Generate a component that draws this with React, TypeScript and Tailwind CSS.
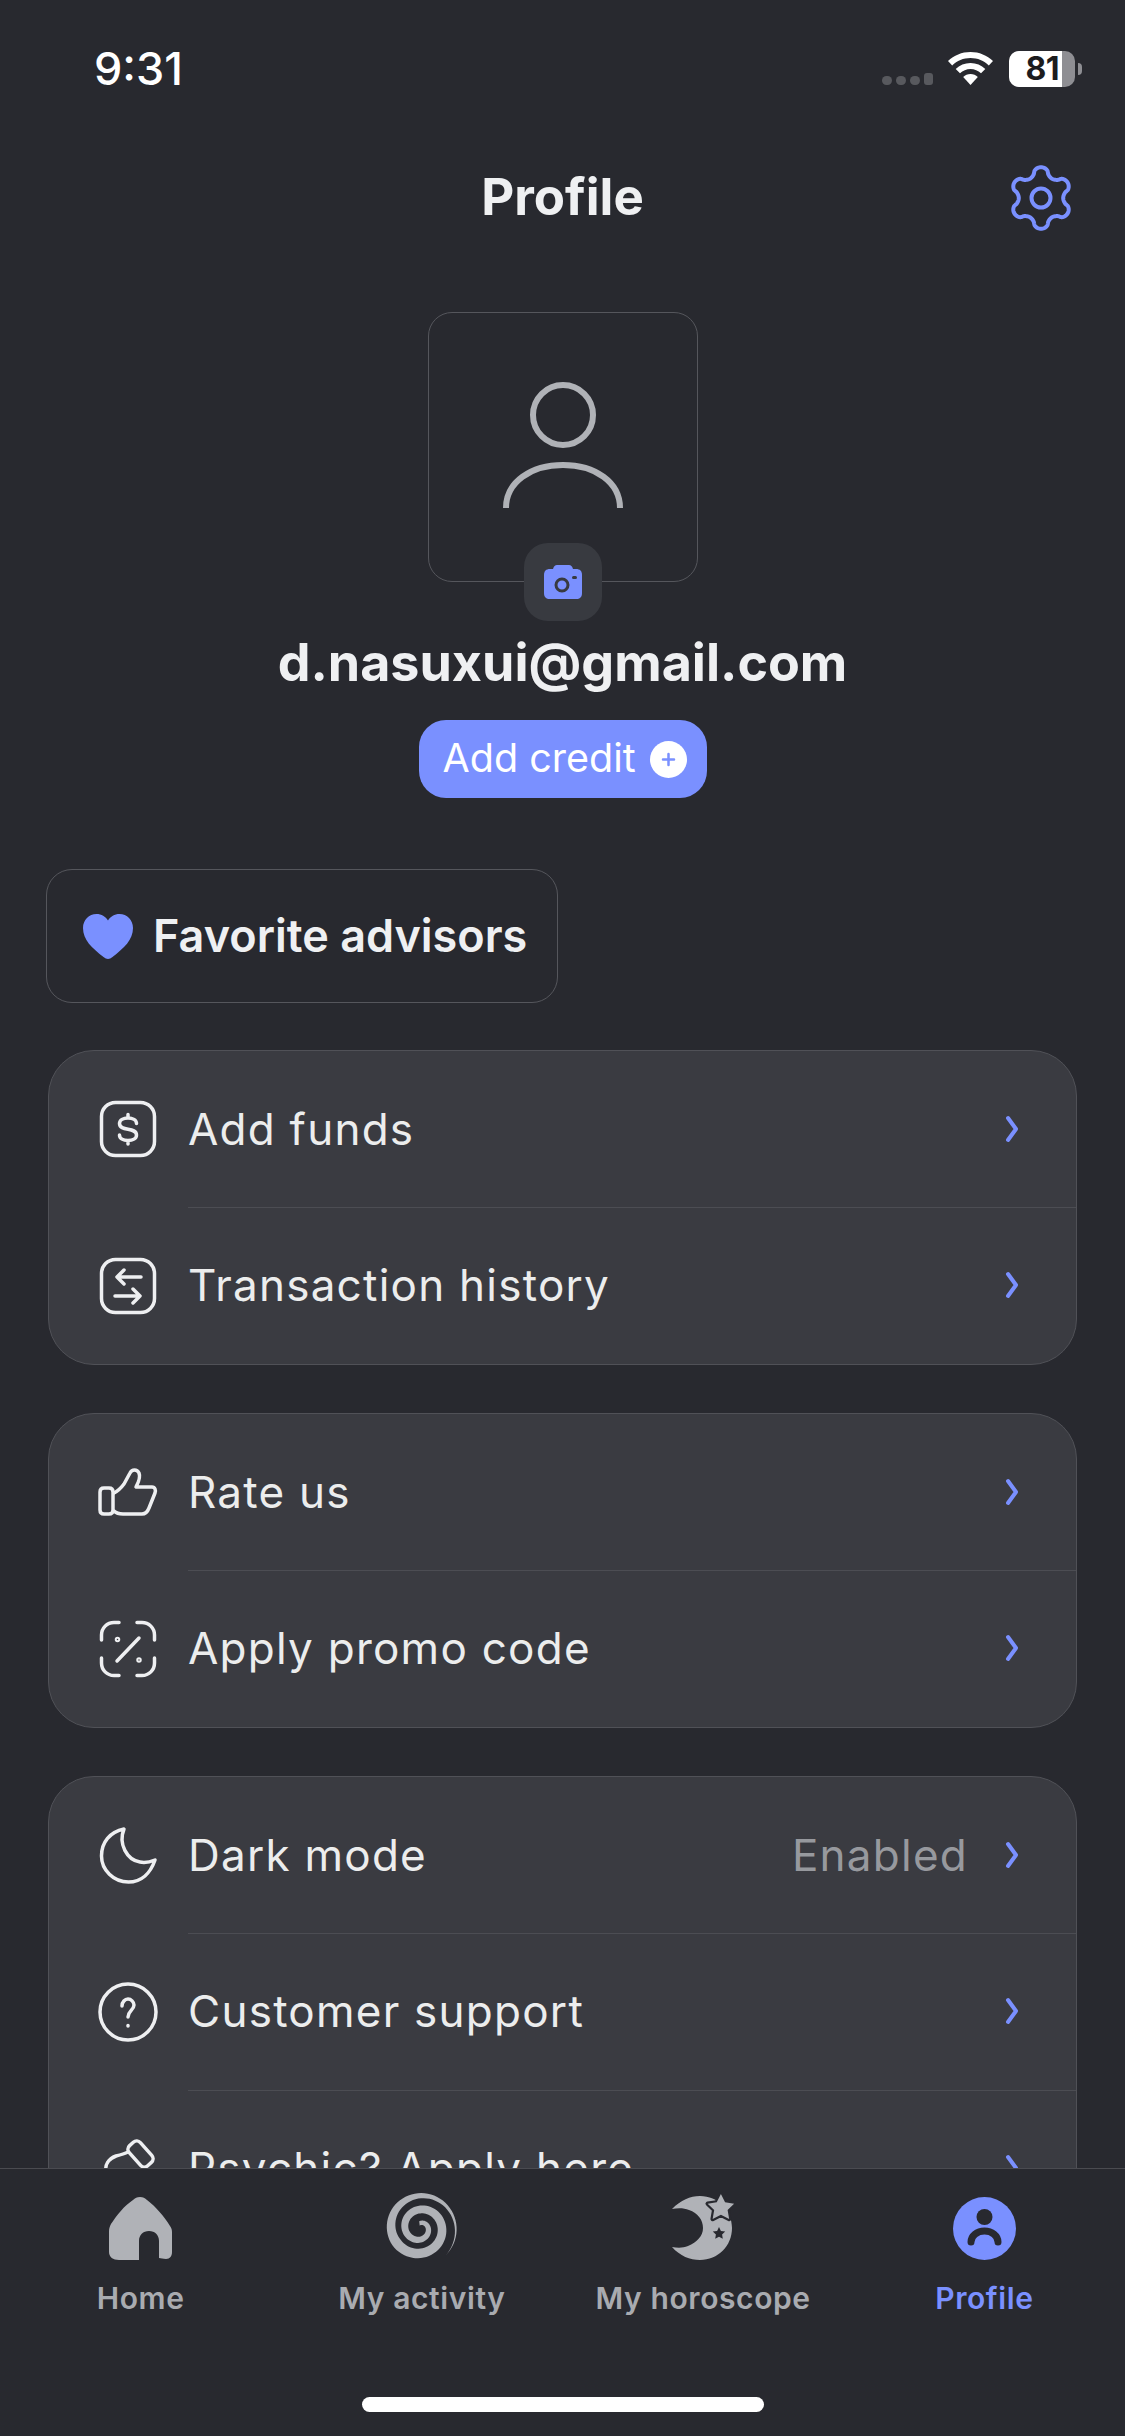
import type { ReactNode } from 'react';

const BLUE = '#7a90ff';
const GREY = '#b0b2b7';
const BG = '#28292f';

function spiralPath() {
  const outer: string[] = [];
  const inner: string[] = [];
  const steps = 160;
  for (let i = 0; i <= steps; i++) {
    const u = i / steps;
    const a = ((47 - u * 360 * 2.4) * Math.PI) / 180;
    const r = 37.5 - u * 33;
    const w = (u < 0.3 ? (u / 0.3) * 10 : 10 - (u - 0.3) * 8) / 2;
    outer.push(`${(34 + (r + w) * Math.cos(a)).toFixed(2)} ${(34 + (r + w) * Math.sin(a)).toFixed(2)}`);
    inner.unshift(`${(34 + (r - w) * Math.cos(a)).toFixed(2)} ${(34 + (r - w) * Math.sin(a)).toFixed(2)}`);
  }
  return `M${outer.join('L')}L${inner.join('L')}Z`;
}

// six rounded lobes, first one pointing up
function gearPath() {
  const pts: string[] = [];
  for (let i = 0; i < 240; i++) {
    const t = (i / 240) * Math.PI * 2;
    const c = Math.cos(6 * t);
    const r = 26.5 + 4.3 * Math.sign(c) * Math.pow(Math.abs(c), 0.6);
    pts.push(`${(34 + r * Math.sin(t)).toFixed(2)} ${(34 - r * Math.cos(t)).toFixed(2)}`);
  }
  return `M${pts.join('L')}Z`;
}

const line = { fill: 'none', stroke: '#eeeff1', strokeWidth: 3.5, strokeLinecap: 'round', strokeLinejoin: 'round' } as const;

function Icon({ children, h = 56 }: { children: ReactNode; h?: number }) {
  return (
    <svg width="60" height={h} viewBox={`-2 0 60 ${h}`} className="shrink-0 overflow-visible" {...line}>
      {children}
    </svg>
  );
}

const DollarIcon = () => (
  <Icon>
    <rect x="1.500" y="1.500" width="53" height="53" rx="14" />
    <path d="M36.500 22.500c0-3.500-3.800-5.500-8.500-5.500s-8.500 2-8.500 5.500c0 8.500 17 3 17 11.500 0 3.500-3.800 5.500-8.500 5.500s-8.500-2-8.500-5.500M28 13.500V17M28 39.500V43" />
  </Icon>
);

const TransferIcon = () => (
  <Icon>
    <rect x="1.500" y="1.500" width="53" height="53" rx="14" />
    <path d="M41 19H17M24 12l-7 7 7 7M15 38h25M33 31l7 7-7 7" />
  </Icon>
);

const ThumbIcon = () => (
  <Icon>
    <g transform="translate(-2 3)">
      <path d="M6 21h5c2.500 0 4 1.500 4 4v18c0 2.500-1.500 4-4 4H6c-2.500 0-4-1.500-4-4V25c0-2.500 1.500-4 4-4z" />
      <path d="M16 26c4-2 7-5 10-9l6-11c2-4 7-4 9 0 2 5-1 10-3 14h16c3 0 4 3 3 6l-6 15c-1.500 4-3 6-7 6H25c-4 0-7-1-9-3" />
    </g>
  </Icon>
);

const PromoIcon = () => (
  <Icon>
    <path d="M1.500 19v-5C1.500 7 7 1.500 14 1.500h5M37 1.500h5c7 0 12.500 5.500 12.500 12.500v5M54.500 37v5c0 7-5.500 12.500-12.500 12.500h-5M19 54.500h-5C7 54.500 1.500 49 1.500 42v-5" />
    <path d="M39 17 17 40" />
    <circle cx="17.500" cy="18.500" r="1" />
    <circle cx="39" cy="39" r="1" />
  </Icon>
);

const MoonIcon = () => (
  <Icon>
    <path d="M24 2C10 5 1.500 15 1.500 29c0 14 12 26 27 26 13 0 22-9 26.500-22-5 2-10 3-15 2C27 33 18 17 24 2z" />
  </Icon>
);

const QuestionIcon = () => (
  <Icon>
    <circle cx="28" cy="28" r="28" />
    <path d="M22 22c0-4 3-7 6-7s6 3 6 6c0 5-6 6-6 12M28 41.500v.5" />
  </Icon>
);

const HandIcon = () => (
  <Icon>
    <rect x="27" y="5.500" width="27" height="15" rx="5" transform="rotate(48 40.500 13)" />
    <path d="M6 40V30C5 24 8 18 16 15c4-1 8-2 12-4" />
  </Icon>
);

function Chevron() {
  return (
    <svg width="14" height="28" viewBox="0 0 14 28" className="shrink-0 -mr-[2px]" fill="none" stroke={BLUE} strokeWidth="4" strokeLinecap="round" strokeLinejoin="round">
      <path d="M3 3 11 14 3 25" />
    </svg>
  );
}

function Row({ icon, label, value, divider }: { icon: ReactNode; label: string; value?: string; divider?: boolean }) {
  return (
    <div className="flex items-center pl-[49px]">
      {icon}
      <div className={`ml-[30px] flex flex-1 items-center pr-[59px] ${divider ? 'h-[157px] border-t border-[#4c4d53] pb-[2px]' : 'h-[156px]'}`}>
        <span className="flex-1 text-[44px] tracking-[1.25px] text-[#eceded]">{label}</span>
        {value && <span className="mr-[37px] text-[44px] tracking-[1.25px] text-[#97999e]">{value}</span>}
        <Chevron />
      </div>
    </div>
  );
}

function Card({ children }: { children: ReactNode }) {
  return <div className="mx-[48px] mt-[48px] overflow-hidden rounded-[46px] border border-[#505157] bg-[#3a3b41]">{children}</div>;
}

function TabHome() {
  return (
    <svg width="63" height="63" viewBox="0 0 63 63" fill={GREY}>
      <path fillRule="evenodd" d="M31 0c3 0 5 1 7 3 9 7 17 16 23 26 1.500 2 2 4 2 6v20c0 4-2 7-6 7-3 0-5-1-7-1V44c0-6-4-10-10-10s-10 4-10 10v19H10c-6 0-10-3-10-8V34c0-3 1-5 2-7C8 18 15 9 24 3c2-2 4-3 7-3z" />
    </svg>
  );
}

function TabSpiral() {
  return (
    <svg width="72" height="68" viewBox="0 0 72 68" fill={GREY} className="overflow-visible">
      <path d={spiralPath()} />
    </svg>
  );
}

function TabHoroscope() {
  const star = 'M49 0l3.800 7.600 8.200 1.200-5.900 5.700 1.400 8.200L49 18.800l-7.500 3.900 1.400-8.200L37 8.800l8.200-1.200z';
  return (
    <svg width="62" height="66" viewBox="0 0 62 66" fill={GREY} className="overflow-visible">
      <path d="M0 14C9 5 18 1 28 1c18 0 32 14 32 32s-14 32-32 32c-10 0-20-4-28-13 6 1 11 1 16-1 9-4 15-10 15-18s-5-15-14-18c-5-2-11-2-17-1z" />
      <path d={star} stroke={BG} strokeWidth="4" strokeLinejoin="round" paintOrder="stroke" transform="translate(-5 -1) scale(1.1)" />
      <path d="M47 32l1.900 3.900 4.300.6-3.100 3 .7 4.300-3.800-2-3.800 2 .7-4.300-3.100-3 4.300-.6z" fill={BG} />
    </svg>
  );
}

function TabProfile() {
  return (
    <svg width="63" height="63" viewBox="0 0 63 63">
      <circle cx="31.500" cy="31.500" r="31.500" fill={BLUE} />
      <circle cx="31.500" cy="20" r="8" fill={BG} />
      <path d="M18 45c0-6 6-11 13.500-11S45 39 45 45" fill="none" stroke={BG} strokeWidth="7" strokeLinecap="round" />
    </svg>
  );
}

function Tab({ icon, label, active }: { icon: ReactNode; label: string; active?: boolean }) {
  return (
    <div className="flex flex-col items-center">
      <div className="flex h-[68px] items-center justify-center">{icon}</div>
      <span className={`mt-[18px] text-[30px] leading-[36px] font-semibold tracking-[0.6px] ${active ? 'text-[#7a90ff]' : 'text-[#a9abb0]'}`}>{label}</span>
    </div>
  );
}

export default function App() {
  return (
    <div className="flex h-[2436px] w-[1125px] flex-col overflow-hidden bg-[#28292f] font-['Inter',sans-serif] text-[#eff0f2]">
      <main className="min-h-0 flex-1 overflow-hidden">
        {/* Status bar */}
        <div className="flex h-[150px] items-start justify-between pr-[43px] pl-[94px]">
          <span className="mt-[44px] text-[45px] leading-[50px] font-medium text-white">9:31</span>
          <div className="mt-[51px] flex items-end">
            <div className="mb-[2px] flex items-end gap-[4px]">
              <i className="h-[9px] w-[10px] rounded-full bg-[#58595e]" />
              <i className="h-[9px] w-[10px] rounded-full bg-[#58595e]" />
              <i className="h-[9px] w-[10px] rounded-full bg-[#58595e]" />
              <i className="h-[12px] w-[9px] rounded-[3px] bg-[#58595e]" />
            </div>
            <svg width="45" height="33" viewBox="0 0 45 33" className="mb-[2px] ml-[15px]" fill="#fff">
              <path d="M22.500 0C13.800 0 5.900 3.400 0 9l4.200 4.400C9 8.900 15.400 6.100 22.500 6.100s13.500 2.800 18.300 7.300L45 9C39.100 3.400 31.200 0 22.500 0z" />
              <path d="M22.500 11c-5.700 0-10.900 2.200-14.800 5.900l4.300 4.400c2.800-2.600 6.500-4.200 10.500-4.200s7.700 1.600 10.500 4.200l4.300-4.400C33.400 13.200 28.200 11 22.500 11z" />
              <path d="M22.500 22c-2.800 0-5.400 1.100-7.300 2.900l7.300 8.100 7.300-8.100C27.900 23.100 25.300 22 22.500 22z" />
            </svg>
            <div className="ml-[16px] h-[36px] w-[66px] rounded-[10px] bg-[#8e8e93]">
              <div className="flex h-full w-[53px] items-center justify-end rounded-l-[10px] bg-white pr-[3px] text-[32px] leading-none font-bold tracking-[-0.5px] text-[#1c1c1e]">
                81
              </div>
            </div>
            <div className="mb-[12px] ml-[3px] h-[12px] w-[4px] rounded-r-full bg-[#8e8e93]" />
          </div>
        </div>

        {/* Header */}
        <div className="relative flex h-[95px] items-center justify-center">
          <h1 className="text-[51px] font-bold">Profile</h1>
          <svg width="68" height="68" viewBox="0 0 68 68" className="absolute top-[14px] right-[50px]" fill="none" stroke={BLUE} strokeWidth="4" strokeLinejoin="round">
            <path d={gearPath()} />
            <circle cx="34" cy="34" r="9.500" />
          </svg>
        </div>

        {/* Avatar */}
        <div className="mt-[67px] flex flex-col items-center">
          <div className="relative flex h-[270px] w-[270px] justify-center rounded-[24px] border-[1.5px] border-[#55565c]">
            <svg width="120" height="146" viewBox="0 0 120 146" className="mt-[69px]" fill="none" stroke={GREY} strokeWidth="6">
              <circle cx="60" cy="33" r="30" />
              <path d="M3 126C3 100 28 83 60 83S117 100 117 126" />
            </svg>
            <div className="absolute top-[230px] left-[95px] flex h-[78px] w-[78px] items-center justify-center rounded-[24px] bg-[#383a40]">
              <svg width="38" height="34" viewBox="0 0 38 34">
                <path fill={BLUE} d="M13 0h12c2 0 3 1 4 4h3c4 0 6 2 6 6v18c0 4-2 6-6 6H6c-4 0-6-2-6-6V10c0-4 2-6 6-6h3c1-3 2-4 4-4z" />
                <circle cx="18" cy="20" r="6" fill="none" stroke="#383a40" strokeWidth="3" />
                <rect x="28" y="11" width="5" height="3" rx="1.500" fill="#383a40" />
              </svg>
            </div>
          </div>

          <div className="mt-[48px] text-[52px] leading-[66px] font-bold">d.nasuxui@gmail.com</div>

          <div className="mt-[24px] flex h-[78px] w-[288px] items-center rounded-[27px] bg-[#7a90ff] pl-[24px] text-white">
            <span className="text-[39.5px] leading-none">Add credit</span>
            <span className="ml-[14px] flex h-[37px] w-[37px] items-center justify-center rounded-full bg-white">
              <svg width="15" height="15" viewBox="0 0 15 15" stroke={BLUE} strokeWidth="2.500" strokeLinecap="round">
                <path d="M7.500 2v11M2 7.500h11" />
              </svg>
            </span>
          </div>
        </div>

        {/* Favorite advisors */}
        <div className="mt-[71px] -mb-[1px] ml-[46px] flex h-[134px] w-[512px] items-center rounded-[26px] border-[1.5px] border-[#55565c] pl-[36px]">
          <svg width="50" height="45" viewBox="0 0 50 45" fill={BLUE} className="shrink-0">
            <path d="M25 45c-1.500 0-3-.8-4.500-2C9 34 0 26 0 14 0 6 6 0 13.500 0 18.500 0 22.500 2.500 25 6.500 27.500 2.500 31.500 0 36.500 0 44 0 50 6 50 14c0 12-9 20-20.500 29-1.500 1.200-3 2-4.500 2z" />
          </svg>
          <span className="ml-[20px] text-[45px] font-semibold">Favorite advisors</span>
        </div>

        <Card>
          <Row icon={<DollarIcon />} label="Add funds" />
          <Row icon={<TransferIcon />} label="Transaction history" divider />
        </Card>
        <Card>
          <Row icon={<ThumbIcon />} label="Rate us" />
          <Row icon={<PromoIcon />} label="Apply promo code" divider />
        </Card>
        <Card>
          <Row icon={<MoonIcon />} label="Dark mode" value="Enabled" />
          <Row icon={<QuestionIcon />} label="Customer support" divider />
          <Row icon={<HandIcon />} label="Psychic? Apply here" divider />
        </Card>
      </main>

      {/* Tab bar */}
      <nav className="flex h-[268px] shrink-0 flex-col border-t border-[#4a4b50] bg-[#28292f]">
        <div className="grid grid-cols-4 pt-[25px]">
          <Tab icon={<TabHome />} label="Home" />
          <Tab icon={<TabSpiral />} label="My activity" />
          <Tab icon={<TabHoroscope />} label="My horoscope" />
          <Tab icon={<TabProfile />} label="Profile" active />
        </div>
        <div className="mx-auto mt-auto mb-[24px] h-[15px] w-[402px] rounded-full bg-white" />
      </nav>
    </div>
  );
}
